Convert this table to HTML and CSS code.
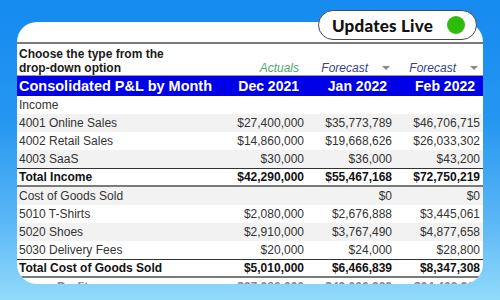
FILE: index.html
```html
<!DOCTYPE html>
<html>
<head>
<meta charset="utf-8">
<link rel="stylesheet" href="styles.css">
</head>
<body>
<div class="stage">
  <div class="badge"><span class="badge-text">Updates Live</span><span class="dot"></span></div>
  <div class="card">
    <div class="topgap"></div>
    <div class="row choose">
      <div class="lbl">Choose the type from the<br>drop-down option</div>
      <div class="type actual">Actuals</div>
      <div class="type fc">Forecast<span class="caret"></span></div>
      <div class="type fc">Forecast<span class="caret"></span></div>
    </div>
    <div class="row head">
      <div class="lbl">Consolidated P&amp;L by Month</div>
      <div class="hv">Dec 2021</div>
      <div class="hv">Jan 2022</div>
      <div class="hv">Feb 2022</div>
    </div>
    <div class="row"><div class="lbl">Income</div><div></div><div></div><div></div></div>
    <div class="row alt"><div class="lbl">4001 Online Sales</div><div class="v">$27,400,000</div><div class="v">$35,773,789</div><div class="v">$46,706,715</div></div>
    <div class="row"><div class="lbl">4002 Retail Sales</div><div class="v">$14,860,000</div><div class="v">$19,668,626</div><div class="v">$26,033,302</div></div>
    <div class="row alt"><div class="lbl">4003 SaaS</div><div class="v">$30,000</div><div class="v">$36,000</div><div class="v">$43,200</div></div>
    <div class="row total"><div class="lbl">Total Income</div><div class="v">$42,290,000</div><div class="v">$55,467,168</div><div class="v">$72,750,219</div></div>
    <div class="row alt"><div class="lbl">Cost of Goods Sold</div><div class="v"></div><div class="v">$0</div><div class="v">$0</div></div>
    <div class="row"><div class="lbl">5010 T-Shirts</div><div class="v">$2,080,000</div><div class="v">$2,676,888</div><div class="v">$3,445,061</div></div>
    <div class="row alt"><div class="lbl">5020 Shoes</div><div class="v">$2,910,000</div><div class="v">$3,767,490</div><div class="v">$4,877,658</div></div>
    <div class="row"><div class="lbl">5030 Delivery Fees</div><div class="v">$20,000</div><div class="v">$24,000</div><div class="v">$28,800</div></div>
    <div class="row total"><div class="lbl">Total Cost of Goods Sold</div><div class="v">$5,010,000</div><div class="v">$6,466,839</div><div class="v">$8,347,308</div></div>
    <div class="row faded"><div class="lbl">Gross Profit</div><div class="v">$37,280,000</div><div class="v">$49,000,329</div><div class="v">$64,402,911</div></div>
  </div>
</div>
</body>
</html>
```

FILE: styles.css
```css
html, body {
  margin: 0;
  padding: 0;
}
body {
  width: 500px;
  height: 300px;
  overflow: hidden;
  font-family: "Liberation Sans", Arial, sans-serif;
}
.stage {
  position: relative;
  width: 500px;
  height: 300px;
  padding: 22px 0 0 17px;
  box-sizing: border-box;
  background: linear-gradient(to bottom, #158af0 0%, #2596f1 40%, #5db8f6 75%, #92dcfb 100%);
}
.card {
  width: 466px;
  height: 262px;
  background: #fff;
  border-radius: 20px;
  overflow: hidden;
  padding-right: 3px;
  box-sizing: border-box;
}
.topgap {
  height: 20px;
  border-bottom: 2px solid #7a7a7a;
  margin-right: -3px;
}
.row {
  display: grid;
  grid-template-columns: 199px 88px 88px 88px;
  height: 18px;
  line-height: 18px;
  font-size: 12px;
  color: #333;
  margin-right: -3px;
  padding-right: 3px;
}
.row .lbl {
  padding-left: 2px;
  white-space: nowrap;
}
.row .v {
  text-align: right;
  white-space: nowrap;
}
.alt {
  background: #f2f2f2;
}
.choose {
  line-height: 14px;
  border-bottom: 1px solid #9a9a9a;
  align-items: end;
  padding-bottom: 0;
  box-sizing: border-box;
  height: 32px;
}
.choose .lbl {
  font-weight: bold;
  color: #1a1a1a;
}
.type {
  font-style: italic;
  text-align: right;
  font-size: 12px;
  display: flex;
  justify-content: flex-end;
  align-items: center;
}
.actual {
  color: #4fa56e;
  padding-right: 5px;
}
.fc {
  color: #33438f;
  padding-right: 2px;
}
.caret {
  width: 0;
  height: 0;
  border-left: 4px solid transparent;
  border-right: 4px solid transparent;
  border-top: 4px solid #8a8a8a;
  margin-left: 14px;
}
.head {
  background: #0000e8;
  color: #fff;
  font-weight: bold;
  height: 20px;
  line-height: 20px;
}
.head .lbl {
  font-size: 14.5px;
}
.hv {
  font-size: 14px;
  text-align: right;
  padding-right: 5px;
}
.total {
  height: 19px;
  line-height: 16px;
  border-top: 1px solid #333;
  border-bottom: 2px solid #7a7a7a;
  box-sizing: border-box;
  font-weight: bold;
  color: #111;
}
.faded {
  color: #888;
  font-weight: bold;
  line-height: 18px;
}
.badge {
  position: absolute;
  left: 318px;
  top: 10px;
  width: 159px;
  height: 30px;
  box-sizing: border-box;
  border: 1px solid #4a4a4a;
  border-radius: 15px;
  background: #fff;
  display: flex;
  align-items: center;
  padding-left: 13px;
  gap: 14px;
}
.badge-text {
  font-family: Lato, "Noto Sans", sans-serif;
  font-weight: 900;
  font-size: 17px;
  color: #111;
  letter-spacing: 0.2px;
}
.dot {
  width: 18px;
  height: 18px;
  border-radius: 50%;
  background: #2fbb0c;
}
```
